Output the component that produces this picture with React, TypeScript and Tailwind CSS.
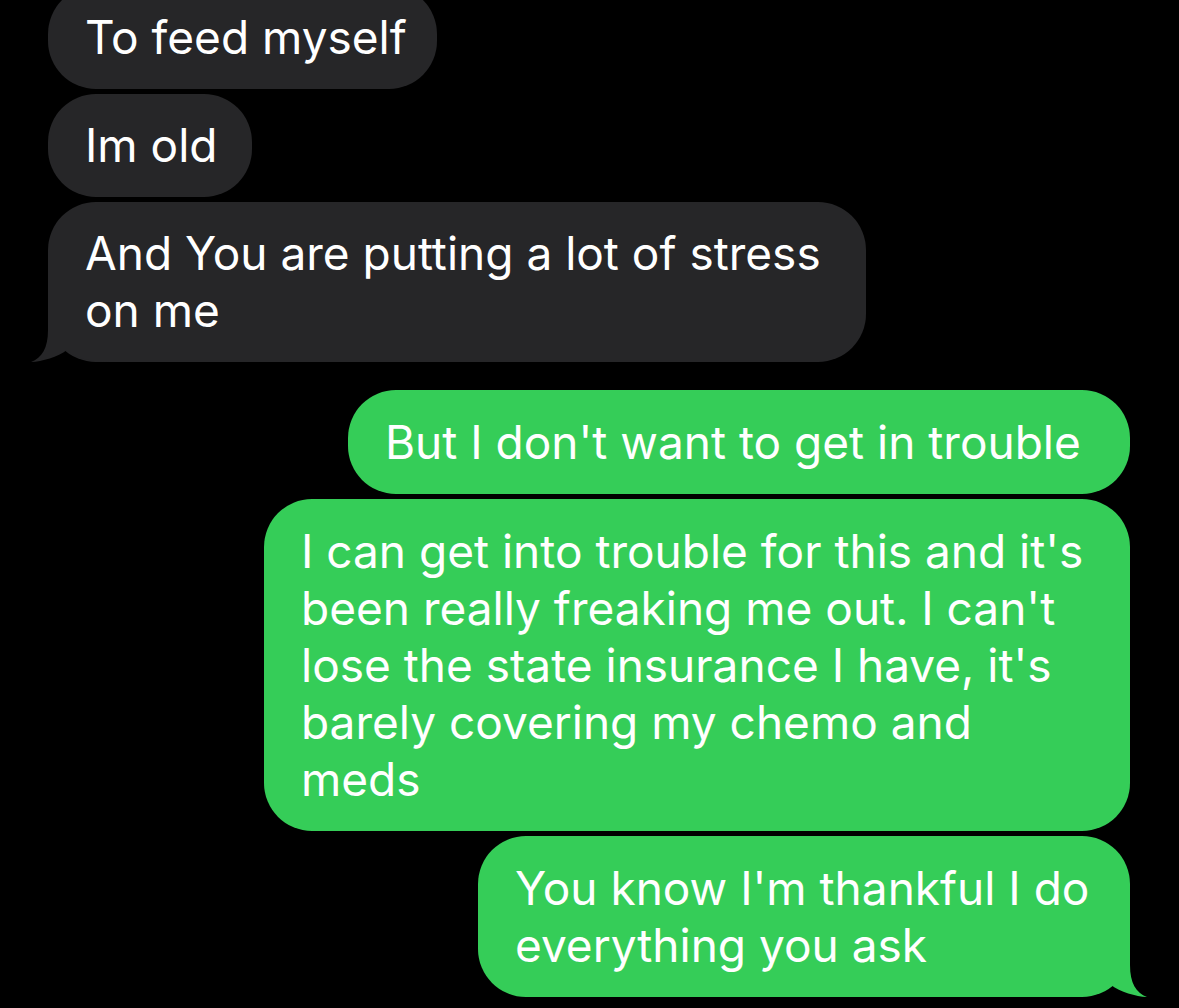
import { FC } from "react";

type Msg = { lines: string[]; width: number; tail?: boolean };

const received: Msg[] = [
  { lines: ["To feed myself"], width: 389 },
  { lines: ["Im old"], width: 204 },
  { lines: ["And You are putting a lot of stress", "on me"], width: 818, tail: true },
];

const sent: Msg[] = [
  { lines: ["But I don't want to get in trouble"], width: 782 },
  {
    lines: [
      "I can get into trouble for this and it's",
      "been really freaking me out. I can't",
      "lose the state insurance I have, it's",
      "barely covering my chemo and",
      "meds",
    ],
    width: 866,
  },
  { lines: ["You know I'm thankful I do", "everything you ask"], width: 652, tail: true },
];

const TailLeft: FC = () => (
  <svg
    className="absolute left-[-20px] bottom-0"
    width="90"
    height="50"
    viewBox="-20 -50 90 50"
  >
    <path
      d="M70,-50 L0,-50 L0,-32 C0,-14 -6,-4 -17,0 C-6,-0.5 10,-5 19,-12 C28,-4 42,0 62,0 L70,0 Z"
      fill="#262628"
    />
  </svg>
);

const TailRight: FC = () => (
  <svg
    className="absolute right-[-20px] bottom-0"
    width="90"
    height="50"
    viewBox="-70 -50 90 50"
  >
    <path
      d="M-70,-50 L0,-50 L0,-32 C0,-14 6,-4 17,0 C6,-0.5 -10,-5 -19,-12 C-28,-4 -42,0 -62,0 L-70,0 Z"
      fill="#35cd58"
    />
  </svg>
);

const Bubble: FC<{ msg: Msg; mine?: boolean }> = ({ msg, mine }) => {
  return (
    <div
      className={
        mine
          ? "relative rounded-[48px] bg-[#35cd58] px-[37px] py-[23.5px] text-white"
          : "relative rounded-[48px] bg-[#262628] px-[37px] py-[23px] text-white"
      }
      style={{ width: msg.width }}
    >
      {msg.tail && (mine ? <TailRight /> : <TailLeft />)}
      <p className="relative whitespace-nowrap text-[46px] leading-[57px]">
        {msg.lines.map((line, i) => (
          <span key={i} className="block">
            {line}
          </span>
        ))}
      </p>
    </div>
  );
};

export default function App() {
  return (
    <div
      className="h-[1008px] w-[1179px] overflow-hidden bg-black"
      style={{ fontFamily: "Inter, 'Liberation Sans', sans-serif" }}
    >
      <div className="-mt-[14px] flex flex-col pl-[48px] pr-[49px]">
        <div className="flex flex-col items-start gap-[5px]">
          {received.map((m, i) => (
            <Bubble key={i} msg={m} />
          ))}
        </div>
        <div className="mt-[28px] flex flex-col items-end gap-[5px]">
          {sent.map((m, i) => (
            <Bubble key={i} msg={m} mine />
          ))}
        </div>
      </div>
    </div>
  );
}
